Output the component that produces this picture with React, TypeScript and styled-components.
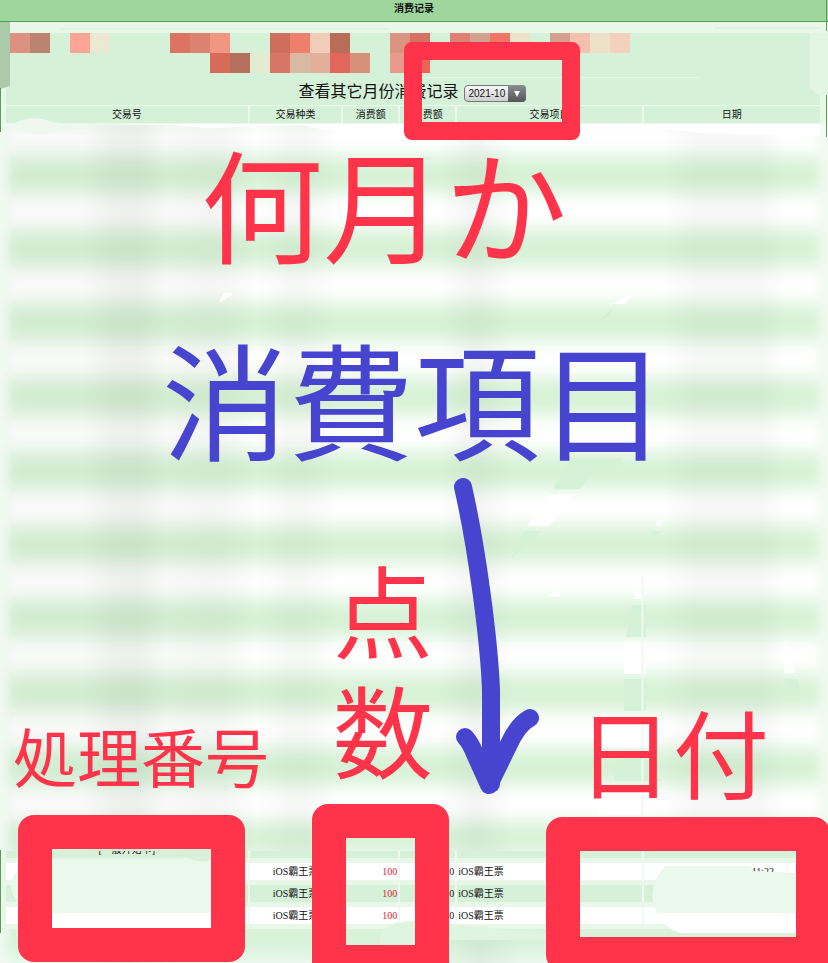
import React from "react";
import styled, { createGlobalStyle } from "styled-components";

const RED = "#ff344b";
const BLUE = "#4744d0";
const MINT = "#d5f2d8";
const PALE = "#e9f7e9";

const GlobalStyle = createGlobalStyle`
  * { box-sizing: border-box; }
  body { margin: 0; background: ${PALE}; }
`;

const Page = styled.main`
  position: relative;
  display: flex;
  flex-direction: column;
  min-height: 100vh;
  overflow: hidden;
  background: ${PALE};
  color: #111;
  font-family: "Liberation Sans", "Noto Sans CJK SC", sans-serif;
  font-size: 10px;
`;

const TitleBar = styled.h1`
  margin: 0;
  height: 22px;
  padding-top: 1px;
  background: #9fd69d;
  border-bottom: 1px solid #4fa050;
  font-size: 10px;
  line-height: 15px;
  text-align: center;
`;

const Panel = styled.section`
  margin: 11px 8px 0 6px;
  background: ${MINT};
`;

const Mosaic = styled.div`
  display: grid;
  grid-template-columns: repeat(31, 20px);
  grid-template-rows: 20px 20px;
  margin-left: 4px;
`;

const Tile = styled.span<{ $col: number; $row: number; $color: string }>`
  grid-column: ${(p) => p.$col};
  grid-row: ${(p) => p.$row};
  background: ${(p) => p.$color};
`;

const MonthForm = styled.form`
  display: flex;
  align-items: center;
  justify-content: center;
  gap: 5px;
  height: 32px;
  padding: 6px 2px 0 0;
`;

const MonthLabel = styled.label`
  font-size: 16px;
  line-height: 24px;
`;

const SelectShell = styled.span`
  position: relative;
  display: inline-flex;
  margin-top: 3px;
`;

const MonthSelect = styled.select`
  appearance: none;
  width: 62px;
  height: 17px;
  padding: 0 0 0 4px;
  border: 1px solid #777;
  border-radius: 4px;
  background: linear-gradient(#f8f8f8, #cfcfcf);
  color: #111;
  font-family: "Liberation Sans", sans-serif;
  font-size: 10px;
`;

const SelectArrow = styled.span`
  position: absolute;
  top: 0;
  right: 0;
  display: flex;
  align-items: center;
  justify-content: center;
  width: 18px;
  height: 17px;
  border-radius: 0 4px 4px 0;
  background: linear-gradient(#8d8d8d, #555);
  pointer-events: none;
`;

const RecordTable = styled.table`
  width: 100%;
  border-collapse: separate;
  border-spacing: 0;
  table-layout: fixed;
  background: ${PALE};
`;

const Col = styled.col<{ $share: number }>`
  width: ${(p) => p.$share}%;
`;

const HeadCell = styled.th`
  height: 19px;
  padding: 0;
  border: solid #eaf8ea;
  border-width: 1px 0 1px 2px;
  background: ${MINT};
  font-weight: 400;
  line-height: 16px;
  text-align: center;
  &:first-child { border-left: 0; }
`;

const Cell = styled.td<{ $align?: string; $tinted?: boolean; $red?: boolean }>`
  height: 22px;
  padding: 0 1px;
  border-left: 2px solid #f0faf0;
  border-bottom: 5px solid ${PALE};
  background: ${(p) => (p.$tinted ? MINT : "#fff")};
  color: ${(p) => (p.$red ? "#d8262b" : "#111")};
  font-family: "Liberation Serif", "Noto Sans CJK SC", serif;
  line-height: 16px;
  text-align: ${(p) => p.$align ?? "left"};
  white-space: nowrap;
  &:first-child { border-left: 0; }
`;

const DateCell = styled(Cell)`
  padding-left: 14px;
`;

const PartialCell = styled(Cell)`
  height: 12px;
`;

const Clipped = styled.div`
  display: flex;
  justify-content: center;
  align-items: flex-end;
  height: 7px;
  overflow: hidden;
`;

const HazeCell = styled.td`
  padding: 0;
`;

const Haze = styled.div`
  position: relative;
  overflow: hidden;
  margin: 0 -8px 0 -6px;
  background: #f0f9f0;
  &::after {
    content: "";
    position: absolute;
    inset: 0;
    background:
      linear-gradient(to right, #f0faf0, transparent 14px),
      linear-gradient(to left, #f0faf0, transparent 14px),
      linear-gradient(to right, rgba(60, 70, 60, 0.03) 0 20%, transparent 33%),
      linear-gradient(to right, transparent 10%, rgba(60, 70, 60, 0.05) 14% 17%, transparent 20%),
      linear-gradient(to right, transparent 20%, rgba(60, 70, 60, 0.03) 25% 27%, transparent 31%),
      linear-gradient(to right, transparent 31%, rgba(60, 70, 60, 0.04) 35% 37%, transparent 41%),
      linear-gradient(to right, transparent 53%, rgba(60, 70, 60, 0.05) 57% 58%, transparent 62%),
      linear-gradient(to right, transparent 80%, rgba(60, 70, 60, 0.04) 84% 92%, transparent 95%);
  }
`;

const Bands = styled.div`
  margin: 0 4px;
  filter: blur(9px);
`;

const Band = styled.div<{ $tinted: boolean; $height?: number }>`
  height: ${(p) => p.$height ?? 37}px;
  background: ${(p) => (p.$tinted ? "#d6f2d6" : "#ffffff")};
`;

const Tail = styled.div`
  flex: 1;
  min-height: 34px;
  background:
    linear-gradient(to right, #f0faf0, transparent 14px),
    linear-gradient(to left, #f0faf0, transparent 14px),
    linear-gradient(to right, transparent 10%, rgba(60, 70, 60, 0.06) 15%, transparent 21%),
    linear-gradient(to right, transparent 53%, rgba(60, 70, 60, 0.06) 58%, transparent 63%),
    linear-gradient(#d8f3da 40%, #e9f8ea);
`;

const Drawing = styled.svg`
  position: absolute;
  top: 0;
  left: 0;
  pointer-events: none;
`;

const Frame = styled.div<{ $x: number; $y: number; $w: number; $h: number; $line: number }>`
  position: absolute;
  left: ${(p) => p.$x}px;
  top: ${(p) => p.$y}px;
  width: ${(p) => p.$w}px;
  height: ${(p) => p.$h}px;
  border: ${(p) => p.$line}px solid ${RED};
  border-radius: ${(p) => (p.$line > 20 ? 16 : 8)}px;
  pointer-events: none;
`;

const Note = styled.p<{ $x: number; $y: number; $size: number; $color?: string; $leading?: number }>`
  position: absolute;
  left: ${(p) => p.$x}px;
  top: ${(p) => p.$y}px;
  margin: 0;
  color: ${(p) => p.$color ?? RED};
  font-family: "Noto Sans CJK JP", sans-serif;
  font-size: ${(p) => p.$size}px;
  line-height: ${(p) => p.$leading ?? p.$size}px;
  white-space: nowrap;
  pointer-events: none;
`;

type TileSpec = [number, string];
const tileRows: TileSpec[][] = [
  [
    [1, "#dc9181"], [2, "#bb8370"], [4, "#fea495"], [5, "#ece8d1"],
    [9, "#dc7363"], [10, "#de8270"], [11, "#f19681"],
    [14, "#cf6f5b"], [15, "#ec806c"], [16, "#f3cdb8"], [17, "#b76d58"],
    [20, "#da947f"], [21, "#d67264"], [23, "#de8173"], [24, "#d4a08f"],
    [25, "#f07565"], [26, "#ede2cc"], [28, "#d4a08e"], [29, "#f6bfae"],
    [30, "#ede1ca"], [31, "#f2d2bf"],
  ],
  [
    [11, "#d96a58"], [12, "#b6705e"], [13, "#e3ecd3"], [14, "#d87565"],
    [15, "#d8baa3"], [16, "#e1b09a"], [17, "#e2675a"], [18, "#d8907b"],
    [20, "#e89b8a"], [21, "#ee6357"],
  ],
];

const columns = [
  { name: "交易号", share: 29.7 },
  { name: "交易种类", share: 11.5 },
  { name: "消费额", share: 7 },
  { name: "消费额", share: 7 },
  { name: "交易项目", share: 22.9 },
  { name: "日期", share: 21.9 },
];

const records = [
  { kind: "iOS霸王票", spent: "100", other: "0", item: "iOS霸王票", date: "2021-10-31 11:22" },
  { kind: "iOS霸王票", spent: "100", other: "0", item: "iOS霸王票", date: "" },
  { kind: "iOS霸王票", spent: "100", other: "0", item: "iOS霸王票", date: "" },
];

const bandCount = 18;

export default function App() {
  return (
    <>
      <GlobalStyle />
      <Page>
        <TitleBar>消费记录</TitleBar>
        <Panel>
          <Mosaic>
            {tileRows.map((tiles, row) =>
              tiles.map(([col, color]) => (
                <Tile key={`${row}-${col}`} $row={row + 1} $col={col} $color={color} />
              ))
            )}
          </Mosaic>
          <MonthForm>
            <MonthLabel htmlFor="month">查看其它月份消费记录</MonthLabel>
            <SelectShell>
              <MonthSelect id="month" defaultValue="2021-10">
                <option>2021-10</option>
              </MonthSelect>
              <SelectArrow>
                <svg width="8" height="6" viewBox="0 0 8 6" aria-hidden="true">
                  <path d="M1 0h6L4 6z" fill="#fff" />
                </svg>
              </SelectArrow>
            </SelectShell>
          </MonthForm>
          <RecordTable>
            <colgroup>
              {columns.map((c, i) => <Col key={i} $share={c.share} />)}
            </colgroup>
            <thead>
              <tr>{columns.map((c, i) => <HeadCell key={i} scope="col">{c.name}</HeadCell>)}</tr>
            </thead>
            <tbody>
              <tr>
                <HazeCell colSpan={6}>
                  <Haze aria-hidden="true">
                    <Bands>
                      <Band $tinted={false} $height={32} />
                      {Array.from({ length: bandCount }, (_, i) => (
                        <Band key={i} $tinted={i % 2 === 0} />
                      ))}
                      <Band $tinted $height={29} />
                    </Bands>
                  </Haze>
                </HazeCell>
              </tr>
              <tr>
                <PartialCell $tinted><Clipped>[一般开始卡]</Clipped></PartialCell>
                <PartialCell $tinted /><PartialCell $tinted /><PartialCell $tinted />
                <PartialCell $tinted /><PartialCell $tinted />
              </tr>
              {records.map((r, i) => (
                <tr key={i}>
                  <Cell $tinted={i === 1} />
                  <Cell $tinted={i === 1} $align="center">{r.kind}</Cell>
                  <Cell $tinted={i === 1} $align="right" $red>{r.spent}</Cell>
                  <Cell $tinted={i === 1} $align="right">{r.other}</Cell>
                  <Cell $tinted={i === 1}>{r.item}</Cell>
                  <DateCell $tinted={i === 1} $align="center">{r.date}</DateCell>
                </tr>
              ))}
            </tbody>
          </RecordTable>
        </Panel>
        <Tail />

        <Drawing width="828" height="963" viewBox="0 0 828 963" aria-hidden="true">
          <path d="M0 22h10v64l-10 3z" fill="#aacaa9" />
          <path d="M810 33h18v62h-10l-8-7z" fill="#e3f6e3" />
          <path d="M60 29h330M715 28h105" stroke="#d9ecd9" />
          <path d="M414 77.500h285" stroke="#e6f7e5" />
          <path d="M.5 88v44M826.500 95v42M.5 850v83M826.500 0v31" stroke="#5a9d5c" />
          <path d="M84 124h736v12l-110-2-34-4-100 1-140 9-60-4-50-6-26-5-96 3-30-3z" fill="#fff" />
          <path d="M6 128q22-16 46-6l45 5-60 8z" fill="#eef8ee" />
          <path d="M224 293h10l-15 10zM612 304l24-13-12 13z" fill="#fff" />
          <path d="M601 318l12-9-5 9z" fill="#cfeed2" />
          <path d="M571 458h51v7q-24 2-29 7l-13 17h-27zM524 531h18l-31 28z" fill={MINT} />
          <path d="M548 494h27l-26 32h-21zM655 525l6-6v7zM634 599l8-25v25zM624 642h22v32h-22zM784 640l11 33h-11zM549 596l12-12-1 13z" fill="#fff" />
          <path d="M651 531h12l-11 6zM632 605h14v32h-20zM624 679h22v32h-22zM784 679h14l1 14h-13z" fill={MINT} />
          <path d="M601 715h56v33h-56zM601 794q4-8 14-9h34v30h-50z" fill="#fff" />
          <path d="M615 752h28l18 29h-46z" fill={MINT} />
          <path d="M642.500 575v279" stroke="#effaef" strokeWidth="2" />
          <path d="M18 870q-14 16 0 32z" fill="#eaf7eb" />
          <path d="M52 860h159v53H52z" fill="#ebf8ec" />
          <path d="M52 913h159v15H52z" fill="#fff" />
          <path d="M186 857h25v3q-10 4-25-3z" fill="#d7f1da" />
          <path d="M665 866h86l2 5 43 2v40H657q-12-25 8-47z" fill="#ebf8ec" />
          <path d="M658 913h138v20H680q-14-4-22-20z" fill="#fff" />
          <path d="M380 935q5-14 35-14v24h-35zM449 924l97 9v7h-97z" fill="#dff5e0" />
          <path
            d="M463 487C477 548 489 640 491 690L491 784M465 737Q470 742 475 754L489 785L508 746Q518 724 530 718"
            fill="none"
            stroke={BLUE}
            strokeWidth="18"
            strokeLinecap="round"
            strokeLinejoin="round"
          />
        </Drawing>

        <Frame $x={404} $y={42} $w={176} $h={98} $line={18} />
        <Frame $x={18} $y={815} $w={227} $h={147} $line={34} />
        <Frame $x={312} $y={804} $w={137} $h={175} $line={34} />
        <Frame $x={546} $y={817} $w={284} $h={154} $line={34} />

        <Note $x={201} $y={140} $size={122}>何月か</Note>
        <Note $x={162} $y={333} $size={126} $color={BLUE}>消費項目</Note>
        <Note $x={333} $y={548} $size={100} $leading={120}>点<br />数</Note>
        <Note $x={13} $y={722} $size={64}>処理番号</Note>
        <Note $x={577} $y={702} $size={96}>日付</Note>
      </Page>
    </>
  );
}
